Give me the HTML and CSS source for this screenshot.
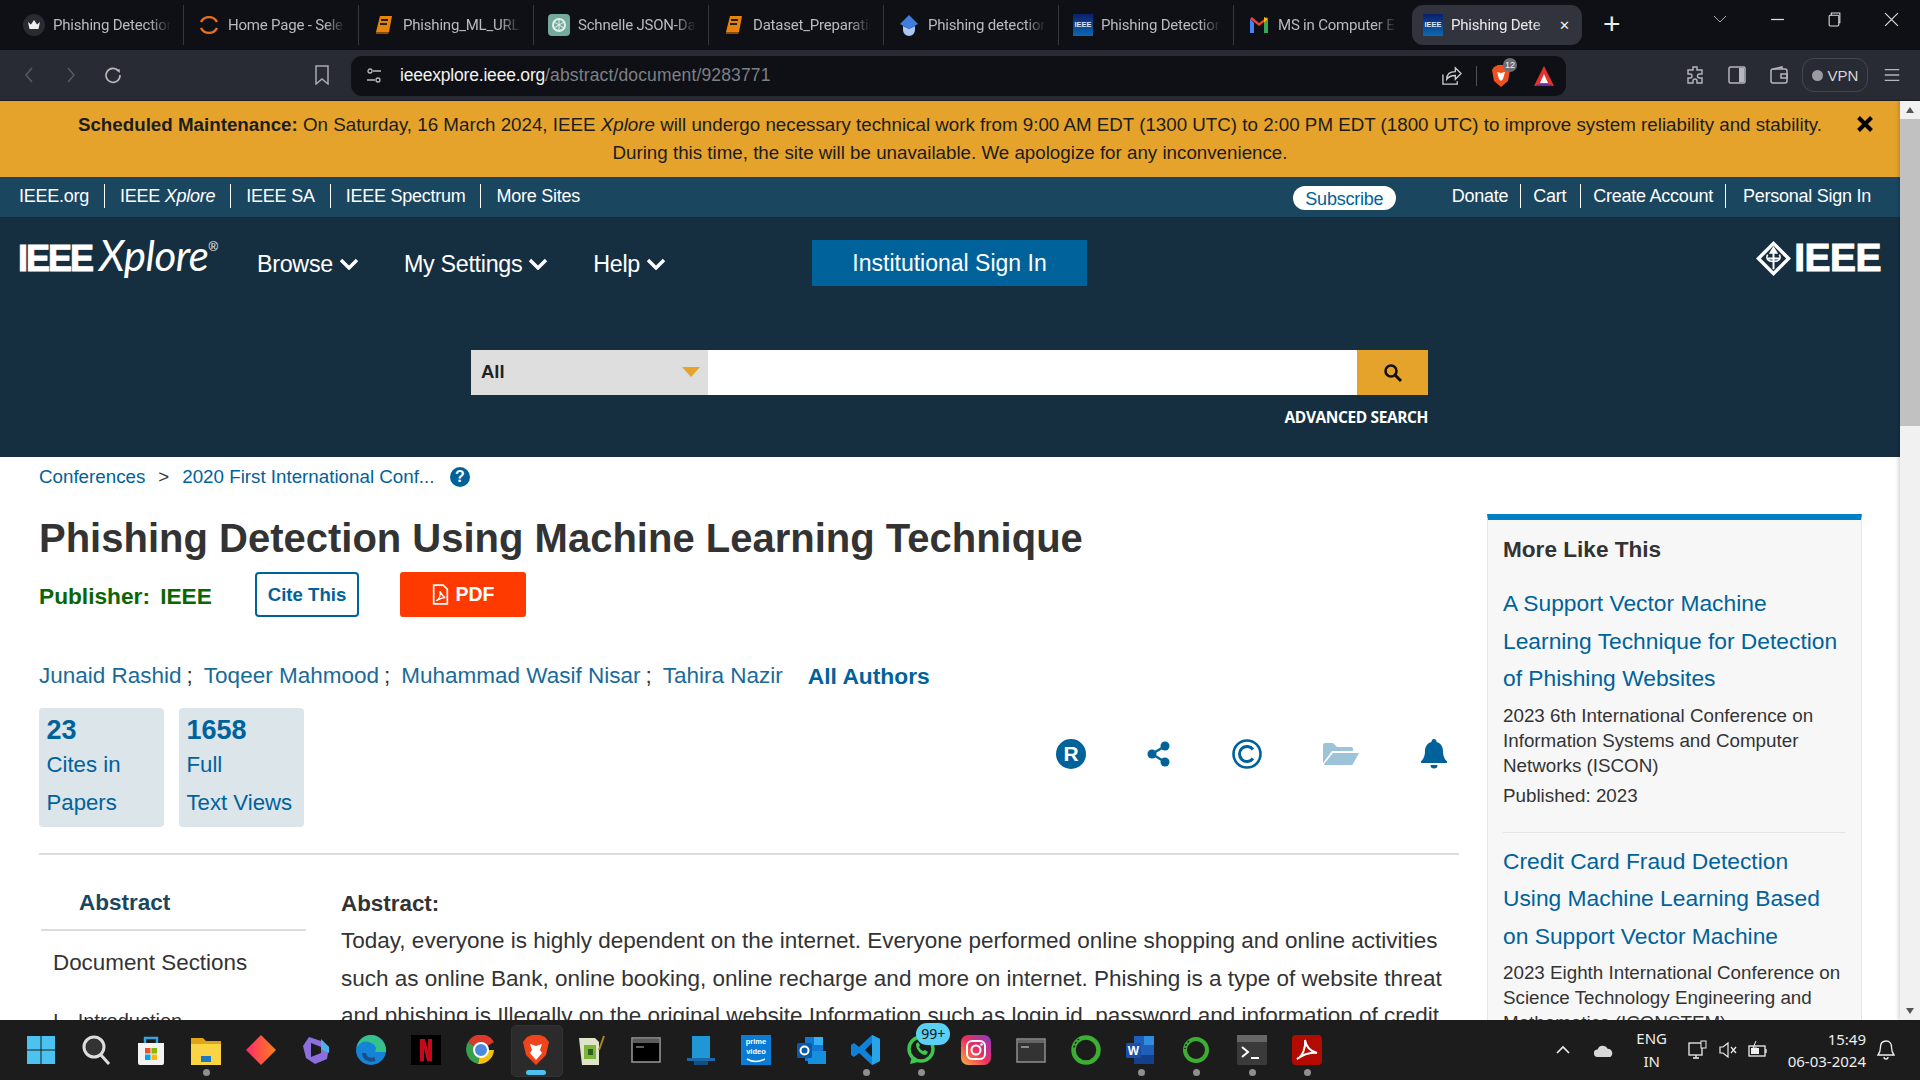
FILE: index.html
```html
<!DOCTYPE html>
<html lang="en">
<head>
<meta charset="utf-8">
<title>Phishing Detection Using Machine Learning Technique</title>
<link rel="stylesheet" href="styles.css">
</head>
<body>
<div class="screen">
  <header class="tabstrip">
    <div class="tab"><span class="fav fav-crown"><svg viewBox="0 0 22 22"><circle cx="11" cy="11" r="11" fill="#2a2a33"/><path d="M5 8l3 2.5L11 6l3 4.5L17 8l-1.5 7h-9z" fill="#eee"/></svg></span><span class="tab-title">Phishing Detection</span></div>
    <div class="tab"><span class="fav"><svg viewBox="0 0 22 22"><path d="M3 8a9 9 0 0 1 16 0M3 14a9 9 0 0 0 16 0" fill="none" stroke="#e8701e" stroke-width="2.4"/></svg></span><span class="tab-title">Home Page - Sele</span></div>
    <div class="tab"><span class="fav"><svg viewBox="0 0 22 22"><path d="M7 2h12l-3 16H3z" fill="#e8830c"/><path d="M8 6h7M7 10h7" stroke="#222" stroke-width="1.8"/><path d="M3 18h13l-1 2H3z" fill="#8a4d08"/></svg></span><span class="tab-title">Phishing_ML_URL_</span></div>
    <div class="tab"><span class="fav"><svg viewBox="0 0 22 22"><rect width="22" height="22" rx="4" fill="#74aa9c"/><circle cx="11" cy="11" r="6" fill="none" stroke="#e4efec" stroke-width="2"/><path d="M11 5v12M6 8l10 6M16 8L6 14" stroke="#e4efec" stroke-width="1"/></svg></span><span class="tab-title">Schnelle JSON-Da</span></div>
    <div class="tab"><span class="fav"><svg viewBox="0 0 22 22"><path d="M7 2h12l-3 16H3z" fill="#e8830c"/><path d="M8 6h7M7 10h7" stroke="#222" stroke-width="1.8"/><path d="M3 18h13l-1 2H3z" fill="#8a4d08"/></svg></span><span class="tab-title">Dataset_Preparatic</span></div>
    <div class="tab"><span class="fav"><svg viewBox="0 0 22 22"><path d="M11 1l9 9-9 5-9-5z" fill="#3f7de0"/><path d="M5 12l6 3 6-3v4a6 6 0 0 1-12 0z" fill="#a9c6f5"/></svg></span><span class="tab-title">Phishing detection</span></div>
    <div class="tab"><span class="fav fav-ieee">IEEE</span><span class="tab-title">Phishing Detection</span></div>
    <div class="tab tab-noline"><span class="fav"><svg viewBox="0 0 22 22"><path d="M2 5v14h4V9z" fill="#4285f4"/><path d="M20 5v14h-4V9z" fill="#34a853"/><path d="M2 5l9 7 9-7-1-2-8 6-7-6z" fill="#ea4335"/><path d="M20 5l-4 4V3z" fill="#fbbc04"/></svg></span><span class="tab-title">MS in Computer E</span></div>
    <div class="tab tab-active"><span class="fav fav-ieee">IEEE</span><span class="tab-title">Phishing Dete</span><span class="tab-close">✕</span></div>
    <div class="newtab">+</div>
    <div class="winctl">
      <svg class="wc-chev" viewBox="0 0 14 8"><path d="M1 1l6 6 6-6" fill="none" stroke="#aaa" stroke-width="1"/></svg>
      <svg class="wc" viewBox="0 0 14 14"><path d="M1 7h12" stroke="#ddd" stroke-width="1.2"/></svg>
      <svg class="wc" viewBox="0 0 14 14"><rect x="2" y="3" width="9" height="10" rx="1" fill="none" stroke="#ddd"/><path d="M4 3V1h8v9h-1" fill="none" stroke="#ddd"/></svg>
      <svg class="wc" viewBox="0 0 14 14"><path d="M1 1l12 12M13 1L1 13" stroke="#ddd" stroke-width="1.1"/></svg>
    </div>
  </header>

  <div class="toolbar">
    <div class="nav-btns">
      <svg class="tb-ico" viewBox="0 0 20 20"><path d="M13 3l-6 7 6 7" fill="none" stroke="#575a62" stroke-width="1.5"/></svg>
      <svg class="tb-ico" viewBox="0 0 20 20"><path d="M7 3l6 7-6 7" fill="none" stroke="#575a62" stroke-width="1.5"/></svg>
      <svg class="tb-ico" viewBox="0 0 20 20"><path d="M15.5 6A7 7 0 1 0 17 10" fill="none" stroke="#bbb" stroke-width="1.6"/><path d="M13 5l3.5-1 .5 4z" fill="#bbb"/></svg>
    </div>
    <svg class="tb-bookmark" viewBox="0 0 16 20"><path d="M2 1h12v18l-6-5-6 5z" fill="none" stroke="#a9abb0" stroke-width="1.5"/></svg>
    <div class="urlbar">
      <svg class="url-tune" viewBox="0 0 18 18"><circle cx="5" cy="4" r="2" fill="none" stroke="#bbb" stroke-width="1.3"/><path d="M8 4h8M2 13h8" stroke="#bbb" stroke-width="1.3"/><circle cx="13" cy="13" r="2" fill="none" stroke="#bbb" stroke-width="1.3"/></svg>
      <span class="url"><span class="url-host">ieeexplore.ieee.org</span>/abstract/document/9283771</span>
      <svg class="url-share" viewBox="0 0 22 22"><path d="M2 10v10h15v-3" fill="none" stroke="#ccc" stroke-width="1.4"/><path d="M6 15c0-6 4-8 9-8V3l6 6-6 6v-4c-4 0-7 1-9 4z" fill="none" stroke="#ccc" stroke-width="1.4"/></svg>
      <span class="url-sep"></span>
      <span class="brave-wrap"><svg class="url-brave" viewBox="0 0 20 24"><path d="M3 3l4-2h6l4 2 2 3-2 11-7 6-7-6L1 6z" fill="#f0501e"/><path d="M6 8l4 1 4-1-2 7-2 2-2-2z" fill="#fff"/></svg><span class="brave-badge">12</span></span>
      <svg class="url-tri" viewBox="0 0 24 24"><path d="M12 2l10 20H2z" fill="#e8302c"/><path d="M2 22l5-2h10l5 2z" fill="#6b2ea0"/><path d="M12 10l4 9H8z" fill="#fff"/></svg>
    </div>
    <div class="tb-right">
      <svg class="tb-ico" viewBox="0 0 20 20"><path d="M8 2h4v3h5v4h-2.500a2 2 0 0 0 0 4H17v5h-5v-2a2 2 0 0 0-4 0v2H3v-5h2a2 2 0 0 0 0-4H3V5h5z" fill="none" stroke="#b5b7bc" stroke-width="1.4"/></svg>
      <svg class="tb-ico" viewBox="0 0 20 20"><rect x="2" y="2" width="16" height="16" rx="1.500" fill="none" stroke="#b5b7bc" stroke-width="1.500"/><rect x="12" y="3" width="5" height="14" fill="#b5b7bc"/></svg>
      <svg class="tb-ico" viewBox="0 0 20 20"><rect x="2" y="4" width="16" height="14" rx="2" fill="none" stroke="#b5b7bc" stroke-width="1.500"/><path d="M4 4l9-2v2M12 9h6v4h-6z" fill="none" stroke="#b5b7bc" stroke-width="1.500"/></svg>
      <div class="vpn"><span class="vpn-dot"></span>VPN</div>
      <svg class="tb-ico menu-ico" viewBox="0 0 20 20"><path d="M2 4h16M2 10h16M2 16h16" stroke="#b5b7bc" stroke-width="1.500"/></svg>
    </div>
  </div>

  <div class="viewport">
    <main class="page">
      <div class="banner">
        <p class="banner-text"><b>Scheduled Maintenance:</b> On Saturday, 16 March 2024, IEEE <i>Xplore</i> will undergo necessary technical work from 9:00 AM EDT (1300 UTC) to 2:00 PM EDT (1800 UTC) to improve system reliability and stability.<br>During this time, the site will be unavailable. We apologize for any inconvenience.</p>
        <svg class="banner-close" viewBox="0 0 18 18"><path d="M2.500 2.500l13 13M15.500 2.500l-13 13" stroke="#000" stroke-width="4"/></svg>
      </div>
      <nav class="meta-nav">
        <div class="meta-left">
          <a>IEEE.org</a><a>IEEE <i>Xplore</i></a><a>IEEE SA</a><a>IEEE Spectrum</a><a>More Sites</a>
        </div>
        <div class="meta-right">
          <span class="subscribe">Subscribe</span>
          <div class="meta-links"><a>Donate</a><a class="meta-cart">Cart</a><a>Create Account</a><a>Personal Sign In</a></div>
        </div>
      </nav>
      <section class="hero">
        <div class="hero-top">
          <div class="logo"><span class="logo-ieee">IEEE</span><span class="logo-x">Xplore</span><sup class="logo-r">®</sup></div>
          <div class="mainnav">
            <a>Browse <svg class="chev" viewBox="0 0 20 12"><path d="M2 2l8 8 8-8" fill="none" stroke="#fff" stroke-width="3.400"/></svg></a>
            <a>My Settings <svg class="chev" viewBox="0 0 20 12"><path d="M2 2l8 8 8-8" fill="none" stroke="#fff" stroke-width="3.400"/></svg></a>
            <a>Help <svg class="chev" viewBox="0 0 20 12"><path d="M2 2l8 8 8-8" fill="none" stroke="#fff" stroke-width="3.400"/></svg></a>
          </div>
          <button class="inst-btn">Institutional Sign In</button>
          <div class="ieee-logo">
            <svg class="ieee-diamond" viewBox="0 0 38 38"><path d="M19 1l18 18-18 18L1 19z" fill="#fff"/><path d="M19 6l13 13-13 13L6 19z" fill="#162f40"/><path d="M19 8v22M13 19h12M19 8l-3 5h6z" stroke="#fff" stroke-width="2" fill="#fff"/><path d="M13 15c-2 4 0 7 6 7s8-3 6-7" fill="none" stroke="#fff" stroke-width="1.600"/></svg>
            <span class="ieee-word">IEEE</span>
          </div>
        </div>
        <div class="search">
          <div class="search-select"><span>All</span><span class="caret"></span></div>
          <div class="search-input"></div>
          <div class="search-btn"><svg viewBox="0 0 20 20"><circle cx="8" cy="8" r="5.500" fill="none" stroke="#111" stroke-width="2.600"/><path d="M12 12l6 6" stroke="#111" stroke-width="3"/></svg></div>
        </div>
        <div class="adv">ADVANCED SEARCH</div>
      </section>

      <div class="doc">
        <div class="doc-main">
          <div class="crumbs"><a>Conferences</a><span class="crumb-sep">&gt;</span><a>2020 First International Conf...</a><svg class="crumb-help" viewBox="0 0 20 20"><circle cx="10" cy="10" r="10" fill="#00629b"/><text x="10" y="15" text-anchor="middle" class="help-q">?</text></svg></div>
          <h1 class="title">Phishing Detection Using Machine Learning Technique</h1>
          <div class="pubrow">
            <span class="publisher">Publisher:&nbsp; IEEE</span>
            <span class="cite">Cite This</span>
            <span class="pdf"><svg class="pdf-ico" viewBox="0 0 16 20"><path d="M1.500 1h9l4 4v14h-13z" fill="none" stroke="#fff" stroke-width="1.600"/><path d="M4 16c3-2 4-6 3.500-9 2 4 3 5 5 6-3 0-5 1-8.500 3z" fill="none" stroke="#fff" stroke-width="1.200"/></svg>PDF</span>
          </div>
          <div class="authors"><a>Junaid Rashid</a><span>;</span><a>Toqeer Mahmood</a><span>;</span><a>Muhammad Wasif Nisar</a><span>;</span><a>Tahira Nazir</a><a class="all-auth">All Authors</a></div>
          <div class="metrics-row">
            <div class="metrics">
              <div class="metric"><b>23</b><span>Cites in</span><span>Papers</span></div>
              <div class="metric metric-wide"><b>1658</b><span>Full</span><span>Text Views</span></div>
            </div>
            <div class="actions">
              <svg class="act" viewBox="0 0 30 30"><circle cx="15" cy="15" r="15" fill="#00629b"/><text x="15" y="22" text-anchor="middle" class="act-r">R</text></svg>
              <svg class="act" viewBox="0 0 30 30"><circle cx="8" cy="15" r="4.500" fill="#00629b"/><circle cx="21" cy="7" r="4.500" fill="#00629b"/><circle cx="21" cy="23" r="4.500" fill="#00629b"/><path d="M8 15l13-8M8 15l13 8" stroke="#00629b" stroke-width="2.400"/></svg>
              <svg class="act" viewBox="0 0 30 30"><circle cx="15" cy="15" r="13.500" fill="none" stroke="#00629b" stroke-width="2.600"/><path d="M21 10.500a7.500 7.500 0 1 0 0 9" fill="none" stroke="#00629b" stroke-width="3"/></svg>
              <svg class="act act-folder" viewBox="0 0 36 24"><path d="M0 3a2 2 0 0 1 2-2h8l4 4h14a2 2 0 0 1 2 2v2H9L0 21z" fill="#9dc3d8"/><path d="M10 11h26l-6 11a2 2 0 0 1-2 1H2a1 1 0 0 1-1-1z" fill="#9dc3d8"/></svg>
              <svg class="act" viewBox="0 0 30 30"><path d="M15 0a2.500 2.500 0 0 1 2.500 3c4.500 1 6.500 5 6.500 9 0 6 2 8 4 10.500v1.500H2v-1.500C4 20 6 18 6 12c0-4 2-8 6.500-9A2.500 2.500 0 0 1 15 0z" fill="#00629b"/><path d="M11.500 26h7a3.500 3.500 0 0 1-7 0z" fill="#00629b"/></svg>
            </div>
          </div>
          <hr class="rule">
          <div class="columns">
            <aside class="sidenav">
              <div class="side-abs">Abstract</div>
              <div class="side-doc">Document Sections</div>
              <div class="side-item">I. Introduction</div>
            </aside>
            <article class="abstract">
              <h2 class="abs-head">Abstract:</h2>
              <p class="abs-body">Today, everyone is highly dependent on the internet. Everyone performed online shopping and online activities such as online Bank, online booking, online recharge and more on internet. Phishing is a type of website threat and phishing is Illegally on the original website Information such as login id, password and information of credit</p>
            </article>
          </div>
        </div>
        <aside class="more">
          <h3 class="more-head">More Like This</h3>
          <div class="more-item">
            <a class="more-link">A Support Vector Machine Learning Technique for Detection of Phishing Websites</a>
            <p class="more-conf">2023 6th International Conference on Information Systems and Computer Networks (ISCON)</p>
            <p class="more-pub">Published: 2023</p>
          </div>
          <div class="more-item">
            <a class="more-link">Credit Card Fraud Detection Using Machine Learning Based on Support Vector Machine</a>
            <p class="more-conf">2023 Eighth International Conference on Science Technology Engineering and Mathematics (ICONSTEM)</p>
          </div>
        </aside>
      </div>
    </main>
    <div class="scrollbar"><span class="sb-up"></span><span class="sb-thumb"></span><span class="sb-down"></span></div>
  </div>

  <footer class="taskbar">
    <div class="task-icons">
      <span class="ti"><svg viewBox="0 0 30 30"><path d="M1 1h13.500v13.500H1zM15.500 1H29v13.500H15.500zM1 15.500h13.500V29H1zM15.500 15.500H29V29H15.500z" fill="#4cc2f1"/></svg></span>
      <span class="ti"><svg viewBox="0 0 30 30"><circle cx="13" cy="12" r="10" fill="#333" stroke="#ddd" stroke-width="3"/><path d="M20 20l8 9" stroke="#ddd" stroke-width="3"/></svg></span>
      <span class="ti"><svg viewBox="0 0 30 30"><path d="M2 8h26v20a2 2 0 0 1-2 2H4a2 2 0 0 1-2-2z" fill="#f3f3f3"/><path d="M9 8V3h12v5" fill="none" stroke="#3aa0e0" stroke-width="2.400"/><path d="M9 13h5.500v5.500H9z" fill="#f25022"/><path d="M15.500 13H21v5.500h-5.500z" fill="#7fba00"/><path d="M9 19.500h5.500V25H9z" fill="#00a4ef"/><path d="M15.500 19.500H21V25h-5.500z" fill="#ffb900"/></svg></span>
      <span class="ti dot"><svg viewBox="0 0 30 30"><path d="M0 3h12l3 3h15v24H0z" fill="#e0a416"/><path d="M0 9h30v21H0z" fill="#fbd443"/><path d="M10 21h10v6H10z" fill="#1a78c8"/></svg></span>
      <span class="ti"><svg viewBox="0 0 30 30"><path d="M15 0l15 15-15 15L0 15z" fill="url(#rg)"/><defs><linearGradient id="rg" x1="0" x2="1"><stop offset="0" stop-color="#ff2a6d"/><stop offset="1" stop-color="#f9801b"/></linearGradient></defs></svg></span>
      <span class="ti"><svg viewBox="0 0 30 30"><path d="M8 2l12 4 8 6-2 12-12 5-9-6-3-12z" fill="#8c6fdc"/><path d="M10 8l10 4v6l-10 4z" fill="#1c1c1c"/><path d="M20 4l8 8v6l-8-4z" fill="#4fb0e8"/></svg></span>
      <span class="ti"><svg viewBox="0 0 30 30"><circle cx="15" cy="15" r="15" fill="#1583d8"/><path d="M30 15c0-8-7-15-15-15C8 0 2 5 1 12c3-5 9-7 14-4 5 2 6 6 4 9h11z" fill="#35c28a"/><path d="M8 18c0 5 5 8 11 6" fill="none" stroke="#1c4e8a" stroke-width="4"/></svg></span>
      <span class="ti"><svg viewBox="0 0 30 30"><rect width="30" height="30" fill="#000"/><path d="M9 4h5l3 12V4h4v22h-5l-3-12v12H9z" fill="#c3091a"/></svg></span>
      <span class="ti"><svg viewBox="0 0 30 30"><path d="M15 15L2 7a15 15 0 0 1 26 0z" fill="#d93a2b"/><path d="M15 15L2 7a15 15 0 0 0 10 22z" fill="#38a04c"/><path d="M15 15h13a15 15 0 0 1-16 14z" fill="#f4c20d"/><circle cx="15" cy="15" r="7" fill="#4a89dc" stroke="#fff" stroke-width="2"/></svg></span>
      <span class="ti ti-active"><svg viewBox="0 0 30 30"><path d="M6 2l5-2h8l5 2 4 5-3 13-10 10L5 20 2 7z" fill="#f0441c"/><path d="M9 9l6 2 6-2-2 6 2 3-6 7-6-7 2-3z" fill="#fff"/></svg></span>
      <span class="ti"><svg viewBox="0 0 30 30"><path d="M3 3h16l4 4v23H6z" fill="#dfe3c9"/><path d="M8 10h12v14H8z" fill="#7db53a"/><path d="M12 14h5v6h-5z" fill="#2f5f1c"/><path d="M28 1l-5 14" stroke="#a88524" stroke-width="2"/></svg></span>
      <span class="ti"><svg viewBox="0 0 30 30"><rect x="1" y="3" width="28" height="24" fill="#000" stroke="#9a9a9a" stroke-width="1.500"/><rect x="2" y="4" width="26" height="4" fill="#5a5a5a"/><path d="M5 12h8" stroke="#bbb"/></svg></span>
      <span class="ti"><svg viewBox="0 0 30 30"><path d="M6 1h18v22H6z" fill="#2196d6"/><path d="M1 23h28v3H1z" fill="#1a68a8"/><path d="M8 26h14v4H8z" fill="#134f80"/></svg></span>
      <span class="ti"><svg viewBox="0 0 30 30"><rect width="30" height="30" fill="#0a7cd6"/><text x="15" y="9" text-anchor="middle" class="prime-t">prime</text><text x="15" y="19" text-anchor="middle" class="prime-t">video</text><path d="M6 24c5 3 12 3 18 0" fill="none" stroke="#fff" stroke-width="1.500"/></svg></span>
      <span class="ti"><svg viewBox="0 0 30 30"><path d="M9 2h18v24H9z" fill="#0f78d4"/><path d="M18 2h9v8h-9z" fill="#38b0f0"/><path d="M12 16h18v13H12z" fill="#1490df"/><rect x="1" y="8" width="15" height="15" rx="1.500" fill="#0a5aa8"/><circle cx="8.500" cy="15.500" r="4" fill="none" stroke="#fff" stroke-width="2"/></svg></span>
      <span class="ti dot"><svg viewBox="0 0 30 30"><path d="M21 0l8 4v22l-8 4L8 18l-5 4-3-2v-10l3-2 5 4z" fill="#0f82d8"/><path d="M21 8l-7 7 7 7z" fill="#1c1c1c"/><path d="M21 0l8 4v22l-8 4z" fill="#28a5ea"/></svg></span>
      <span class="ti dot wa"><svg viewBox="0 0 30 30"><circle cx="15" cy="14" r="12" fill="none" stroke="#3cc84e" stroke-width="3.400"/><path d="M4 29l2-8 6 6z" fill="#3cc84e"/><path d="M10 9c0 6 5 11 10 11l2-3-3-2-2 1c-2-1-3-2-4-4l1-2-2-3z" fill="#3cc84e"/></svg><span class="wa-badge">99+</span></span>
      <span class="ti"><svg viewBox="0 0 30 30"><defs><linearGradient id="ig" x1="0" y1="1" x2="1" y2="0"><stop offset="0" stop-color="#fdb23a"/><stop offset=".5" stop-color="#e8305f"/><stop offset="1" stop-color="#8a3ac8"/></linearGradient></defs><rect width="30" height="30" rx="7" fill="url(#ig)"/><rect x="6" y="6" width="18" height="18" rx="5" fill="none" stroke="#fff" stroke-width="2"/><circle cx="15" cy="15" r="4.500" fill="none" stroke="#fff" stroke-width="2"/><circle cx="20.500" cy="9.500" r="1.300" fill="#fff"/></svg></span>
      <span class="ti"><svg viewBox="0 0 30 30"><rect x="1" y="4" width="28" height="23" fill="#333" stroke="#8f8f8f" stroke-width="1.500"/><rect x="2" y="5" width="26" height="3" fill="#666"/><path d="M5 12h8" stroke="#aaa" stroke-width="1.500"/></svg></span>
      <span class="ti"><svg viewBox="0 0 30 30"><circle cx="15" cy="15" r="12.500" fill="none" stroke="#3cae33" stroke-width="4.500"/><path d="M8 4a12.500 12.500 0 0 0-5 10" fill="none" stroke="#1c1c1c" stroke-width="1.500" stroke-dasharray="2 2"/></svg></span>
      <span class="ti dot"><svg viewBox="0 0 30 30"><path d="M8 1h20v28H8z" fill="#1f5fb8"/><path d="M18 1h10v9H18z" fill="#2f8de0"/><path d="M8 20h20v9H8z" fill="#12408c"/><rect x="0" y="8" width="15" height="15" rx="1.500" fill="#1a4fa8"/><text x="7.500" y="20" text-anchor="middle" class="word-t">W</text></svg></span>
      <span class="ti dot"><svg viewBox="0 0 30 30"><circle cx="15" cy="15" r="11" fill="none" stroke="#3cae33" stroke-width="4"/><path d="M8 6a11 11 0 0 0-4 8" fill="none" stroke="#1c1c1c" stroke-width="1.500" stroke-dasharray="2 2"/></svg></span>
      <span class="ti dot"><svg viewBox="0 0 30 30"><rect width="30" height="30" rx="2" fill="#3a3a3a"/><rect width="30" height="7" fill="#666"/><path d="M5 12l6 5-6 5" fill="none" stroke="#fff" stroke-width="2"/><path d="M14 23h8" stroke="#fff" stroke-width="2"/></svg></span>
      <span class="ti dot"><svg viewBox="0 0 30 30"><rect width="30" height="30" rx="4" fill="#b30b00"/><path d="M5 24c6-3 9-12 8-19 1 6 5 11 12 13-7-1-13 1-20 6z" fill="none" stroke="#fff" stroke-width="2"/></svg></span>
    </div>
    <div class="tray">
      <svg class="tray-up" viewBox="0 0 14 10"><path d="M1 8l6-6 6 6" fill="none" stroke="#eee" stroke-width="1.600"/></svg>
      <svg class="tray-cloud" viewBox="0 0 24 16"><path d="M5 15a4 4 0 0 1 0-8 6 6 0 0 1 11-1 5 5 0 0 1 3 9z" fill="#d8d8d8"/></svg>
      <div class="lang"><span>ENG</span><span>IN</span></div>
      <div class="tray-status">
        <svg class="ts" viewBox="0 0 20 20"><rect x="1" y="3" width="13" height="12" fill="none" stroke="#eee" stroke-width="1.300"/><rect x="13" y="1" width="5" height="7" fill="#1c1c1c" stroke="#eee"/><path d="M5 18h6M8 15v3" stroke="#eee" stroke-width="1.300"/></svg>
        <svg class="ts" viewBox="0 0 20 20"><path d="M2 7h3l5-4v14l-5-4H2z" fill="none" stroke="#eee" stroke-width="1.200"/><path d="M13 7l5 6M18 7l-5 6" stroke="#eee" stroke-width="1.200"/></svg>
        <svg class="ts" viewBox="0 0 20 20"><rect x="1" y="6" width="16" height="10" fill="none" stroke="#eee" stroke-width="1.300"/><path d="M18 9v4" stroke="#eee" stroke-width="1.300"/><path d="M3 8h8v6H3z" fill="#eee"/><path d="M8 1L5 8h4l-2 5" fill="none" stroke="#eee"/></svg>
      </div>
      <div class="clock"><span>15:49</span><span>06-03-2024</span></div>
      <svg class="tray-bell" viewBox="0 0 18 22"><path d="M9 2c-4 0-5.500 3-5.500 6 0 4-1 6-2.500 8h16c-1.500-2-2.500-4-2.500-8 0-3-1.500-6-5.500-6z" fill="none" stroke="#eee" stroke-width="1.300"/><path d="M7 18a2 2 0 0 0 4 0" fill="none" stroke="#eee" stroke-width="1.300"/></svg>
    </div>
  </footer>
</div>
</body>
</html>
```
FILE: styles.css
```css
* { box-sizing: border-box; }
html, body { margin: 0; padding: 0; height: 100%; overflow: hidden; }
body { font-family: "Liberation Sans", Arial, sans-serif; background: #fff; color: #333; }
p, h1, h2, h3 { margin: 0; }
.screen { width: 1920px; height: 1080px; display: flex; flex-direction: column; overflow: hidden; }

/* Browser tabs */
.tabstrip { height: 50px; background: #0e1015; display: flex; align-items: flex-start; padding: 5px 0 0 9px; flex: none; position: relative; }
.tab { width: 175px; height: 40px; display: flex; align-items: center; padding: 0 12px 0 14px; gap: 8px; border-right: 1px solid #35383f; color: #b9bbc0; font: 15px Roboto, sans-serif; letter-spacing: -.2px; }
.tab-noline { border-right: 0; }
.tab-active { width: 170px; background: #31343c; border-radius: 11px; border: 0; color: #e9eaec; margin-left: 3px; padding: 0 12px 0 11px; }
.tab-title { flex: 1; min-width: 0; white-space: nowrap; overflow: hidden; -webkit-mask-image: linear-gradient(90deg, #000 82%, transparent); mask-image: linear-gradient(90deg, #000 82%, transparent); }
.fav { width: 22px; height: 22px; flex: none; display: block; }
.fav svg { width: 22px; height: 22px; display: block; }
.fav-ieee { background: linear-gradient(#0b1f6e, #0d68b0); color: #dfe9f7; font: bold 7.500px/22px "Liberation Sans", sans-serif; letter-spacing: 0; text-align: center; width: 20px; overflow: hidden; }
.tab-close { color: #f0f0f0; font-size: 13px; flex: none; }
.newtab { color: #ececec; font: 30px/38px "Liberation Sans", sans-serif; margin-left: 21px; height: 40px; }
.winctl { margin-left: auto; display: flex; align-items: center; height: 20px; margin-top: 4px; padding-right: 21px; gap: 42px; }
.wc-chev { width: 14px; height: 8px; margin-right: 1px; }
.wc { width: 15px; height: 15px; }

/* Toolbar */
.toolbar { height: 51px; background: #282b33; border-bottom: 1px solid #1c1e24; display: flex; align-items: center; flex: none; padding-left: 19px; }
.nav-btns { display: flex; gap: 22px; width: 309px; }
.tb-ico { width: 20px; height: 20px; display: block; flex: none; }
.tb-bookmark { width: 16px; height: 20px; margin-left: -14px; flex: none; }
.urlbar { width: 1215px; height: 40px; margin-left: 21px; margin-top: 1px; background: #0e1015; border-radius: 11px; display: flex; align-items: center; padding-left: 14px; padding-right: 10px; }
.url-tune { width: 18px; height: 18px; flex: none; }
.url { margin-left: 17px; font: 17.500px "Liberation Sans", sans-serif; color: #7d8087; white-space: nowrap; letter-spacing: .14px; }
.url-host { color: #f3f3f3; letter-spacing: -.2px; }
.url-share { width: 21px; height: 21px; margin-left: auto; flex: none; }
.url-sep { width: 1px; height: 20px; background: #50535a; margin: 0 14px; }
.brave-wrap { position: relative; display: block; width: 20px; height: 24px; }
.url-brave { width: 20px; height: 24px; display: block; }
.brave-badge { position: absolute; left: 12px; top: -6px; width: 14px; height: 14px; border-radius: 7px; background: #6c6e75; color: #eee; font-size: 9px; line-height: 14px; text-align: center; }
.url-tri { width: 24px; height: 24px; margin-left: 21px; flex: none; }
.tb-right { display: flex; align-items: center; margin-left: 119px; gap: 22px; }
.vpn { width: 66px; height: 34px; border: 1px solid #44474e; border-radius: 12px; display: flex; align-items: center; justify-content: center; gap: 5px; color: #d5d6d9; font: 15px "Liberation Sans", sans-serif; margin-left: -9px; }
.vpn-dot { width: 11px; height: 11px; border-radius: 50%; background: #9a9ca2; }
.menu-ico { margin-left: -7px; width: 18px; height: 18px; }

/* Viewport */
.viewport { flex: 1; min-height: 0; display: flex; }
.page { flex: 1; min-width: 0; overflow: hidden; }
.scrollbar { width: 20px; flex: none; background: #f1f1f1; display: flex; flex-direction: column; align-items: center; box-shadow: -2px 0 3px rgba(0, 0, 0, .15); z-index: 1; }
.sb-up { width: 0; height: 0; border: 4px solid transparent; border-bottom: 6px solid #555; margin-top: 2px; margin-bottom: 6px; }
.sb-thumb { width: 20px; height: 307px; background: #c1c1c1; }
.sb-down { margin-top: auto; width: 0; height: 0; border: 4px solid transparent; border-top: 6px solid #555; margin-bottom: 2px; }

.banner { height: 76px; background: #e5a32b; display: flex; align-items: center; color: #1c1c1c; position: relative; }
.banner-text { flex: 1; font-size: 18.750px; line-height: 28px; text-align: center; }
.banner-close { position: absolute; left: 1856px; top: 14px; width: 18px; height: 18px; }

.meta-nav { height: 40px; background: #1a4660; display: flex; align-items: center; justify-content: space-between; color: #fff; font-size: 18px; letter-spacing: -.25px; padding: 0 29px 2px 0; }
.meta-left { display: flex; padding-left: 4px; }
.meta-left a { padding: 0 15px; border-right: 1px solid #fff; line-height: 24px; }
.meta-left a:last-child { border-right: 0; }
.meta-right { display: flex; align-items: center; }
.subscribe { width: 103px; height: 24px; background: #fff; border-radius: 12px; color: #00629b; text-align: center; line-height: 26px; font-size: 18px; margin-right: 44px; margin-top: 3px; }
.meta-links { display: flex; }
.meta-links a { padding: 0 12px; border-right: 1px solid #fff; line-height: 24px; }
.meta-links .meta-cart { padding-right: 14px; }
.meta-links a:last-child { border-right: 0; padding-right: 0; padding-left: 17px; }

.hero { height: 240px; background: #162f40; color: #fff; }
.hero-top { display: flex; align-items: flex-start; height: 133px; padding-left: 18px; position: relative; }
.logo { margin-top: 16px; width: 239px; white-space: nowrap; line-height: 44px; }
.logo-ieee { font: bold 36px/44px "Liberation Sans", sans-serif; letter-spacing: -2px; -webkit-text-stroke: 1px #fff; }
.logo-x { font: italic 400 42px/44px Lato, "Open Sans", sans-serif; letter-spacing: -.5px; margin-left: 7px; }
.logo-r { font-size: 13px; vertical-align: 20px; line-height: 0; }
.mainnav { display: flex; gap: 45px; margin-top: 31px; font-size: 23.300px; letter-spacing: -.3px; line-height: 32px; }
.mainnav a { display: flex; align-items: center; gap: 6px; white-space: nowrap; }
.chev { width: 20px; height: 12px; }
.inst-btn { margin-left: 146px; margin-top: 23px; width: 275px; height: 46px; background: #00629b; color: #fff; border: 0; font: 23px "Liberation Sans", sans-serif; padding: 0; }
.ieee-logo { position: absolute; right: 19px; top: 22px; display: flex; align-items: center; gap: 2px; }
.ieee-diamond { width: 37px; height: 37px; }
.ieee-word { font: bold 39px/38px "Liberation Sans", sans-serif; letter-spacing: -.5px; -webkit-text-stroke: 1px #fff; }
.search { display: flex; height: 45px; margin-left: 471px; width: 957px; }
.search-select { width: 237px; background: #dedede; color: #222; display: flex; align-items: center; justify-content: space-between; padding: 0 8px 2px 10px; font: bold 18.500px "Liberation Sans", sans-serif; }
.caret { width: 0; height: 0; border-left: 9px solid transparent; border-right: 9px solid transparent; border-top: 10px solid #e5a32b; }
.search-input { flex: 1; background: #fff; }
.search-btn { width: 71px; background: #e5a32b; display: flex; align-items: center; justify-content: center; }
.search-btn svg { width: 20px; height: 20px; }
.adv { margin-left: 471px; width: 957px; text-align: right; font: bold 15.500px/18px "Open Sans", sans-serif; letter-spacing: -.4px; margin-top: 13px; }

/* Document */
.doc { display: flex; padding: 0 0 0 39px; }
.doc-main { width: 1420px; flex: none; }
.crumbs { display: flex; align-items: center; height: 20px; margin-top: 10px; font-size: 18.750px; color: #00629b; }
.crumb-sep { color: #333; margin: 0 13px; }
.crumb-help { width: 20px; height: 20px; margin-left: 16px; }
.help-q { font: bold 16px "Liberation Sans", sans-serif; fill: #fff; }
.title { font-size: 40px; line-height: 48px; margin-top: 27px; color: #333; }
.pubrow { display: flex; align-items: center; margin-top: 9px; height: 46px; }
.publisher { color: #0a6600; font-weight: bold; font-size: 22.700px; width: 216px; padding-top: 4px; word-spacing: -1.200px; }
.cite { width: 104px; height: 45px; border: 2px solid #00629b; border-radius: 4px; color: #00629b; font-weight: bold; font-size: 18.600px; display: flex; align-items: center; justify-content: center; padding-top: 2px; }
.pdf { width: 126px; height: 45px; margin-left: 41px; background: #ff3a00; color: #fff; font-weight: bold; font-size: 19.500px; display: flex; align-items: center; justify-content: center; gap: 7px; border-radius: 3px; }
.pdf-ico { width: 17px; height: 21px; }
.authors { display: flex; align-items: center; margin-top: 44px; height: 30px; font-size: 22.500px; color: #1a6a99; }
.authors span { color: #333; margin: 0 11px 0 5px; }
.all-auth { font-weight: bold; margin-left: 25px; font-size: 22.800px; color: #00629b; }
.metrics-row { display: flex; justify-content: space-between; margin-top: 17px; }
.metrics { display: flex; gap: 15px; }
.metric { width: 125px; height: 119px; background: #dbe5ea; border-radius: 4px; padding: 7px 8px 0 7.500px; color: #00629b; display: flex; flex-direction: column; font-size: 22.200px; line-height: 38px; white-space: nowrap; }
.metric b { font-size: 27px; line-height: 31px; }
.actions { display: flex; align-items: center; height: 92px; gap: 58px; padding-right: 10px; }
.act { width: 30px; height: 30px; display: block; }
.act-folder { width: 36px; height: 24px; margin: 0 2px 0 3px; }
.act-r { font: bold 21px "Liberation Sans", sans-serif; fill: #fff; }
.rule { border: 0; border-top: 2px solid #dcdcdc; margin: 26px 0 0; }
.columns { display: flex; }
.sidenav { width: 302px; flex: none; padding-top: 31px; }
.side-abs { margin-left: 2px; width: 265px; padding: 0 0 9px 38px; font-weight: bold; font-size: 22.500px; line-height: 34px; color: #1a4660; border-bottom: 2px solid #dcdcdc; }
.side-doc { margin: 16px 0 0 14px; font-size: 22.400px; line-height: 32px; }
.side-item { margin: 30px 0 0 14px; font-size: 20px; line-height: 24px; word-spacing: 8px; }
.abstract { flex: 1; min-width: 0; padding-top: 31px; }
.abs-head { font-size: 22.400px; line-height: 36px; font-weight: bold; }
.abs-body { font-size: 22.500px; line-height: 37.500px; }
.more { width: 375px; margin-left: 28px; margin-top: 57px; flex: none; background: #f7f7f7; border: 1px solid #e4e6e8; border-top: 6px solid #0080c4; padding: 13px 15px; height: 600px; }
.more-head { font-size: 22.600px; line-height: 34px; color: #333; margin-bottom: 18px; }
.more-item { padding-bottom: 24px; margin-bottom: 10px; border-bottom: 1px solid #e2e4e6; }
.more-link { display: block; font-size: 22.800px; line-height: 37.500px; color: #00629b; }
.more-conf { font-size: 18.800px; line-height: 25px; margin-top: 5px; }
.more-pub { font-size: 18.800px; line-height: 25px; margin-top: 5px; }

/* Taskbar */
.taskbar { height: 60px; flex: none; background: #1c1c1c; display: flex; align-items: center; padding-left: 25.500px; position: relative; }
.task-icons { display: flex; gap: 25.050px; }
.ti { width: 30px; height: 30px; display: block; position: relative; flex: none; }
.ti svg { width: 30px; height: 30px; display: block; }
.dot::after { content: ""; position: absolute; left: 12px; top: 34px; width: 7px; height: 7px; border-radius: 50%; background: #8f8f8f; }
.ti-active::before { content: ""; position: absolute; left: -10px; top: -10px; width: 50px; height: 50px; background: #2b2b2b; border: 1px solid #333; border-radius: 5px; }
.ti-active::after { content: ""; position: absolute; left: 5px; top: 35px; width: 20px; height: 5px; border-radius: 3px; background: #4cc2f1; }
.ti-active svg { position: relative; }
.wa-badge { position: absolute; left: 10px; top: -12px; width: 34px; height: 22px; border-radius: 11px; background: #5bd0f5; color: #111; font: 14px/22px "Noto Sans", sans-serif; text-align: center; }
.prime-t { font: bold 7.500px "Liberation Sans", sans-serif; fill: #fff; }
.word-t { font: bold 12px "Liberation Sans", sans-serif; fill: #fff; }
.tray { margin-left: auto; display: flex; align-items: center; padding-right: 25px; color: #eee; }
.tray-up { width: 14px; height: 10px; margin-right: 23px; }
.tray-cloud { width: 22px; height: 15px; margin-right: 22px; }
.lang { display: flex; flex-direction: column; align-items: center; font: 15px/23px "Noto Sans", sans-serif; width: 30px; margin-right: 21px; }
.tray-status { display: flex; gap: 10px; margin-right: 20px; }
.ts { width: 20px; height: 20px; }
.clock { display: flex; flex-direction: column; align-items: flex-end; font: 15px/22px "Noto Sans", sans-serif; margin-right: 11px; }
.tray-bell { width: 18px; height: 22px; }
```
